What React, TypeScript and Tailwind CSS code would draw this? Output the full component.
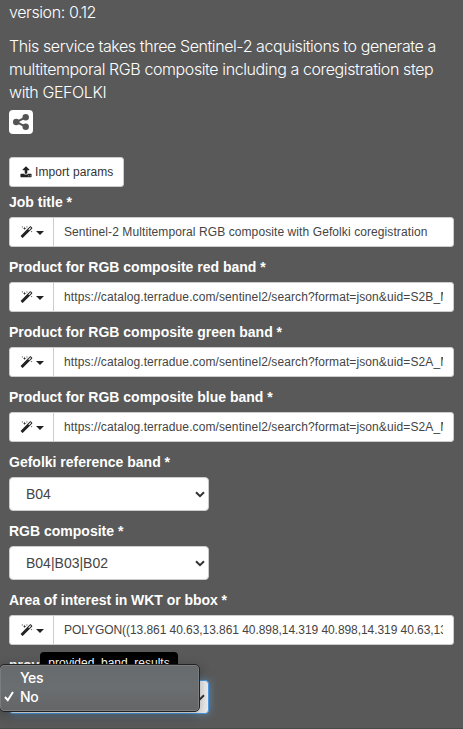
const sans = "font-['Liberation_Sans',Arial,sans-serif]";

function MagicIcon() {
  return (
    <svg className="size-[13px] shrink-0" viewBox="0 0 1792 1792" fill="#222">
      <path d="M1254 581l293-293-107-107-293 293zm447-293q0 27-18 45l-1286 1286q-18 18-45 18t-45-18l-198-198q-18-18-18-45t18-45l1286-1286q18-18 45-18t45 18l198 198q18 18 18 45zm-1351-190l98 30-98 30-30 98-30-98-98-30 98-30 30-98zm350 162l196 60-196 60-60 196-60-196-196-60 196-60 60-196zm930 478l98 30-98 30-30 98-30-98-98-30 98-30 30-98zm-640-640l98 30-98 30-30 98-30-98-98-30 98-30 30-98z" />
    </svg>
  );
}

function UploadIcon() {
  return (
    <svg className="mr-[3px] size-[12px] shrink-0" viewBox="0 0 1792 1792" fill="#222">
      <path d="M1344 1472q0-26-19-45t-45-19-45 19-19 45 19 45 45 19 45-19 19-45zm256 0q0-26-19-45t-45-19-45 19-19 45 19 45 45 19 45-19 19-45zm128-224v320q0 40-28 68t-68 28h-1472q-40 0-68-28t-28-68v-320q0-40 28-68t68-28h427q21 56 70.5 92t110.5 36h256q61 0 110.5-36t70.5-92h427q40 0 68 28t28 68zm-325-648q-17 40-59 40h-256v448q0 26-19 45t-45 19h-256q-26 0-45-19t-19-45v-448h-256q-42 0-59-40-17-39 14-69l448-448q18-19 45-19t45 19l448 448q31 30 14 69z" />
    </svg>
  );
}

function ShareIcon() {
  return (
    <svg className="size-6" viewBox="0 0 24 24" fill="#555">
      <path d="M16.7 7.3 7.2 12 16.7 16.7" fill="none" stroke="#555" strokeWidth="2" />
      <circle cx="7.2" cy="12" r="3.2" />
      <circle cx="16.7" cy="7.3" r="3.2" />
      <circle cx="16.7" cy="16.7" r="3.2" />
    </svg>
  );
}

function Label({ text, spacing = "" }: { text: string; spacing?: string }) {
  return (
    <label className={`mb-[5px] block h-5 whitespace-nowrap text-[14px] leading-5 font-bold text-white ${spacing}`}>
      {text}
    </label>
  );
}

interface InputRowProps {
  label: string;
  value: string;
  spacing?: string;
  labelSpacing?: string;
}

function InputRow({ label, value, spacing = "tracking-[0.1px]", labelSpacing }: InputRowProps) {
  return (
    <div className="mb-2.5">
      <Label text={label} spacing={labelSpacing} />
      <div className="flex h-[30px] w-[445px] overflow-hidden rounded-[3px] border border-[#ccc] bg-white">
        <button className="flex w-[44px] shrink-0 items-center border-r border-[#ccc] pl-[9.5px]">
          <MagicIcon />
          <span className="mt-[2px] ml-[3px] border-x-4 border-t-4 border-x-transparent border-t-[#222]" />
        </button>
        <div className={`mr-[10px] ml-[10px] flex-1 overflow-hidden text-[12px] leading-[28px] whitespace-nowrap text-[#444] ${spacing}`}>
          {value}
        </div>
      </div>
    </div>
  );
}

function Chevron() {
  return (
    <svg width="10" height="7" viewBox="0 0 10 7" fill="none" stroke="#333" strokeWidth="2">
      <path d="M1 1.2 5 5.2 9 1.2" />
    </svg>
  );
}

function SelectRow({ label, value }: { label: string; value: string }) {
  return (
    <div className="mb-2.5">
      <Label text={label} />
      <div className="flex h-[34px] w-[200px] items-center justify-between rounded-[4px] border border-[#ccc] bg-white pr-[3px] pl-4 text-[14px] text-[#444]">
        <span>{value}</span>
        <Chevron />
      </div>
    </div>
  );
}

export default function App() {
  return (
    <div className={`relative h-[729px] w-[463px] overflow-hidden border-b border-[#4a4a4a] bg-[#595959] px-[9px] ${sans}`}>
      <div className="pt-px font-['Inter',sans-serif] text-[16px] leading-[23px] font-light whitespace-nowrap text-white">
        <p className="tracking-[-0.4px]">version: 0.12</p>
        <div className="mt-[11px]">
          <p className="tracking-[-0.42px]">This service takes three Sentinel-2 acquisitions to generate a</p>
          <p className="tracking-[-0.4px]">multitemporal RGB composite including a coregistration step</p>
          <p className="tracking-[-0.4px]">with GEFOLKI</p>
        </div>
      </div>
      <button className="mt-[6px] flex size-6 items-center justify-center rounded-[4px] bg-white">
        <ShareIcon />
      </button>
      <button className="mt-[23px] mb-[5px] flex h-[30px] w-[115px] items-center rounded-[3px] border border-[#ccc] bg-white pl-[10px] text-[12px] tracking-[0.08px] whitespace-nowrap text-[#333]">
        <UploadIcon />
        Import params
      </button>
      <InputRow label="Job title *" value="Sentinel-2 Multitemporal RGB composite with Gefolki coregistration" spacing="tracking-[0.09px]" />
      <InputRow label="Product for RGB composite red band *" value="https://catalog.terradue.com/sentinel2/search?format=json&uid=S2B_MSIL1C" />
      <InputRow label="Product for RGB composite green band *" value="https://catalog.terradue.com/sentinel2/search?format=json&uid=S2A_MSIL1C" />
      <InputRow label="Product for RGB composite blue band *" value="https://catalog.terradue.com/sentinel2/search?format=json&uid=S2A_MSIL1C" />
      <SelectRow label="Gefolki reference band *" value="B04" />
      <SelectRow label="RGB composite *" value="B04|B03|B02" />
      <InputRow
        label="Area of interest in WKT or bbox *"
        value="POLYGON((13.861 40.63,13.861 40.898,14.319 40.898,14.319 40.63,13.861 40.63))"
        spacing="tracking-[-0.06px]"
        labelSpacing="tracking-[-0.04px]"
      />
      <div className="relative">
        <Label text="provided_band_results *" />
        <div className="flex h-[34px] w-[200px] items-center justify-end rounded-[4px] border border-[#4a9ae6] bg-[#eee] pr-[3px] shadow-[0_0_8px_rgba(102,175,233,0.6)]">
          <Chevron />
        </div>
        <div className="absolute top-[-3px] left-[31px] h-[26px] w-[138px] rounded-[4px] bg-black text-center text-[12px] leading-[23px] text-white">
          provided_band_results
        </div>
        <div className="absolute top-[9px] left-[-10px] h-[48px] w-[201px] rounded-[5px] border border-[#222] bg-[linear-gradient(#686b6d,#6b6e70_50%,#636567)] pt-[3px] pl-[20px] font-['Inter',sans-serif] text-[14px] leading-[19px] font-medium tracking-[-0.4px] text-white shadow-[inset_0_0_0_1px_#7a7c7e,0_3px_12px_rgba(0,0,0,0.3)]">
          <div>Yes</div>
          <div className="relative">
            <svg className="absolute top-[4px] left-[-16px]" width="10" height="11" viewBox="0 0 10 11" fill="none" stroke="white" strokeWidth="2">
              <path d="M1 6 3.8 9.2 9 1" />
            </svg>
            No
          </div>
        </div>
      </div>
    </div>
  );
}
